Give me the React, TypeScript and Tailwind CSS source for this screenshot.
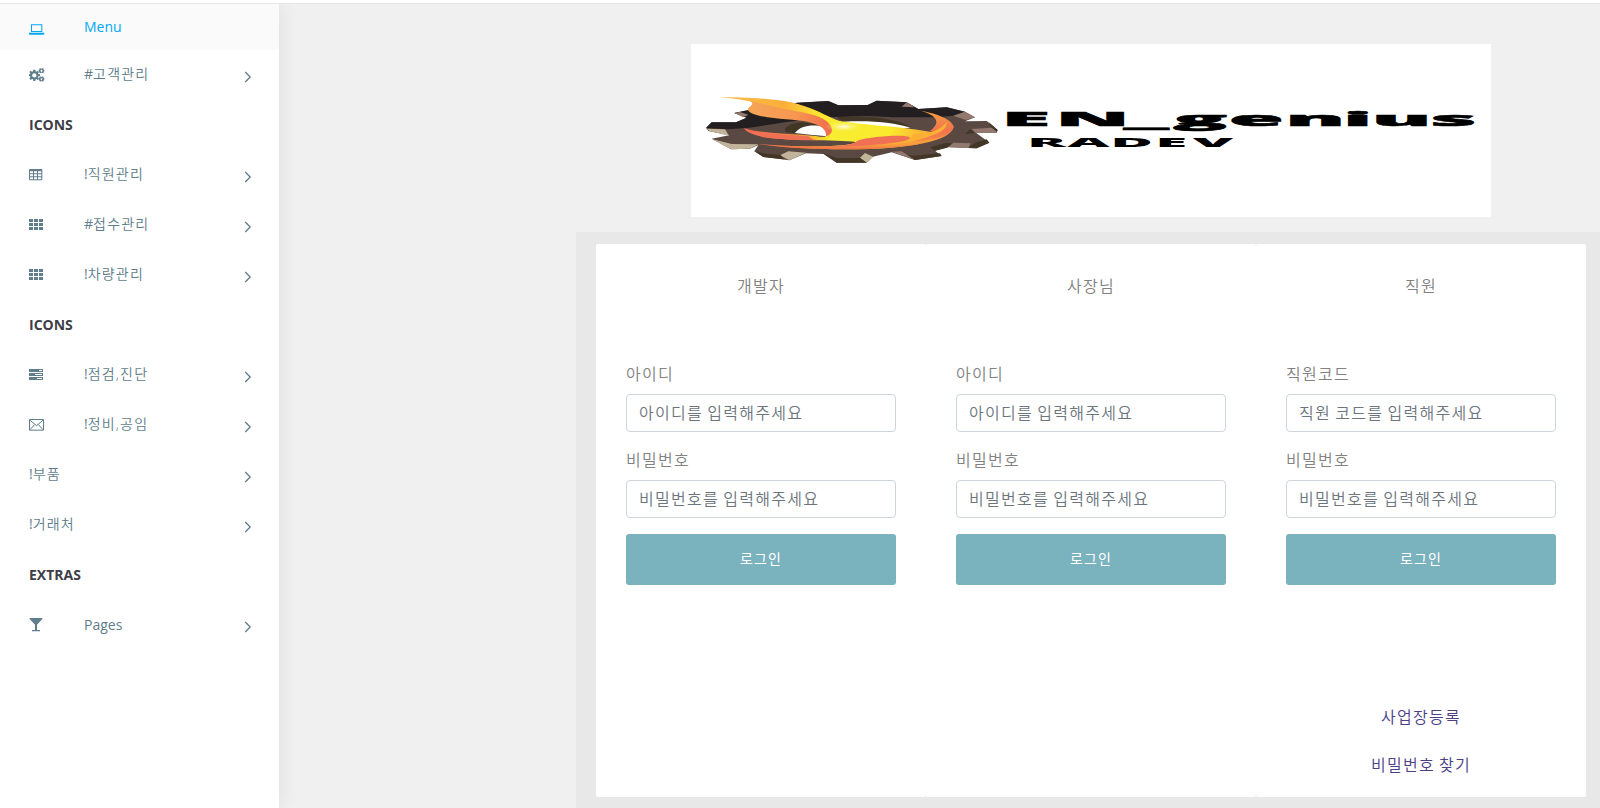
import React from "react";

const laptop = (
  <svg width="16" height="11" viewBox="0 0 48 33" className="mt-1" fill="currentColor">
    <path fillRule="evenodd" d="M6 1h34v23H6zM9 4v17h28V4zM0 26h46v4l-2 2H2l-2-2z" />
  </svg>
);

const cogs = (
  <svg width="16" height="14" viewBox="0 0 48 42" fill="currentColor">
    <path
      fillRule="evenodd"
      d="M13 5h6l1 5 3 1 3-3 4 4-3 4 1 2 5 1v5l-5 1-1 3 3 4-4 4-4-3-2 1-1 5h-6l-1-5-3-1-4 3-4-4 3-4-1-3-4-1v-5l4-1 1-2-3-4 4-4 4 3 3-1zM16 15.500a6.500 6.500 0 1 0 .01 0z"
    />
    <path
      fillRule="evenodd"
      d="M34 0l2 2h3l2-2 3 2v3l2 1v4l-2 1v3l-3 2-2-2h-3l-2 2-3-2V11l-2-1V6l2-1V2zM37.500 5.500a2.800 2.800 0 1 0 .01 0zM34 25l2 2h3l2-2 3 2v3l2 1v4l-2 1v3l-3 2-2-2h-3l-2 2-3-2v-3l-2-1v-4l2-1v-3zM37.500 30.500a2.800 2.800 0 1 0 .01 0z"
    />
  </svg>
);

const table = (
  <svg width="14" height="12" viewBox="0 0 42 36" fill="currentColor">
    <path
      fillRule="evenodd"
      d="M3 0h34q3 0 3 3v28q0 3-3 3H3q-3 0-3-3V3q0-3 3-3zM3 7v6h9V7zM15 7v6h9V7zM27 7v6h10V7zM3 16v6h9v-6zM15 16v6h9v-6zM27 16v6h10v-6zM3 25v6h9v-6zM15 25v6h9v-6zM27 25v6h10v-6z"
    />
  </svg>
);

const grid = (
  <svg width="14" height="12" viewBox="0 0 42 36" fill="currentColor">
    <path d="M0 0h12v9H0zM15 0h12v9H15zM30 0h12v9H30zM0 12h12v9H0zM15 12h12v9H15zM30 12h12v9H30zM0 24h12v9H0zM15 24h12v9H15zM30 24h12v9H30z" />
  </svg>
);

const tasks = (
  <svg width="14" height="12" viewBox="0 0 42 36" fill="currentColor">
    <path
      fillRule="evenodd"
      d="M0 0h42v9H0zM30 3v3h9V3zM0 12h42v9H0zM18 15v3h21v-3zM0 24h42v9H0zM24 27v3h15v-3z"
    />
  </svg>
);

const mail = (
  <svg width="15" height="12" viewBox="0 0 45 36" fill="none" stroke="currentColor" strokeWidth="3">
    <path d="M1.500 1.500h42v32h-42z" />
    <path d="M2 3l20.500 17L43 3M3 32l14-15M42 32L28 17" />
  </svg>
);

const glass = (
  <svg width="14" height="14" viewBox="0 0 42 42" fill="currentColor">
    <path d="M2 0h38v3L24 20v16h9v4H9v-4h9V20L2 3z" />
  </svg>
);

type NavEntry = { heading?: string; mark?: string; label?: string; icon?: React.ReactNode };

const entries: NavEntry[] = [
  { mark: "#", label: "고객관리", icon: cogs },
  { heading: "ICONS" },
  { mark: "!", label: "직원관리", icon: table },
  { mark: "#", label: "접수관리", icon: grid },
  { mark: "!", label: "차량관리", icon: grid },
  { heading: "ICONS" },
  { mark: "!", label: "점검,진단", icon: tasks },
  { mark: "!", label: "정비,공임", icon: mail },
  { mark: "!", label: "부품" },
  { mark: "!", label: "거래처" },
  { heading: "EXTRAS" },
  { label: "Pages", icon: glass },
];

function NavRow({ entry }: { entry: NavEntry }) {
  if (entry.heading) {
    return (
      <li className="flex h-[50px] items-center pl-[29px] text-sm font-bold text-[#3e3e48]">{entry.heading}</li>
    );
  }
  return (
    <li className="flex h-[50px] items-center pr-[27px] pl-[29px] text-sm text-[#607d8b]">
      {entry.icon && <span className="flex w-[55px] shrink-0 items-center">{entry.icon}</span>}
      <span className={entry.mark ? "grow pb-0.5" : "grow"}>
        {entry.mark}
        <span className={entry.mark ? "font-[350] tracking-[1.2px]" : ""}>{entry.label}</span>
      </span>
      <svg width="8" height="12" viewBox="0 0 8 12" fill="none" stroke="currentColor" strokeWidth="1.300" className="mt-1">
        <path d="M1.200 1l5 5-5 5" />
      </svg>
    </li>
  );
}

function Logo() {
  return (
    <svg width="800" height="173" viewBox="33 42 2400 519" className="block bg-white">
      <defs>
        <linearGradient id="tail" x1="0" y1="0" x2="1" y2="0">
          <stop offset="0" stopColor="#fbb040" />
          <stop offset="0.350" stopColor="#f6a257" />
          <stop offset="0.700" stopColor="#f6954f" />
          <stop offset="1" stopColor="#ee6a4f" />
        </linearGradient>
        <linearGradient id="top" x1="0" y1="0" x2="1" y2="0">
          <stop offset="0" stopColor="#fbc04a" />
          <stop offset="0.550" stopColor="#fbae3b" />
          <stop offset="0.800" stopColor="#fce02f" />
          <stop offset="1" stopColor="#f8ed31" />
        </linearGradient>
        <linearGradient id="under" x1="0" y1="0" x2="0" y2="1">
          <stop offset="0" stopColor="#f9a03e" />
          <stop offset="0.600" stopColor="#f0744f" />
          <stop offset="1" stopColor="#f58a45" />
        </linearGradient>
        <linearGradient id="body" x1="0" y1="0" x2="1" y2="0">
          <stop offset="0" stopColor="#f15a4f" />
          <stop offset="0.280" stopColor="#f9a033" />
          <stop offset="0.420" stopColor="#f8ed31" />
          <stop offset="0.700" stopColor="#f9ea2d" />
          <stop offset="0.880" stopColor="#fba93a" />
          <stop offset="1" stopColor="#f47b4b" />
        </linearGradient>
        <linearGradient id="rim" x1="0" y1="0" x2="0" y2="1">
          <stop offset="0" stopColor="#f15a4f" stopOpacity="0" />
          <stop offset="0.500" stopColor="#f9a033" stopOpacity="0.200" />
          <stop offset="1" stopColor="#f15a4f" stopOpacity="0.900" />
        </linearGradient>
        <radialGradient id="glow">
          <stop offset="0" stopColor="#fffde8" />
          <stop offset="1" stopColor="#f8ed31" stopOpacity="0" />
        </radialGradient>
      </defs>

      <path
        fill="#5a4942"
        d="M78 294L95 277L168 277L200 263L163 249L195 242L352 218L445 213L475 226L563 225L590 212L680 217L715 237L800 232L855 245L885 262L855 274L920 273L953 300L950 308L888 308L928 338L890 355L805 352L765 362L785 378L705 390L635 367L579 380L560 398L470 398L430 372L378 370L328 391L250 381L223 364L235 345L210 356L153 358L95 326L147 316L85 303z"
      />
      <path
        fill="#231f20"
        d="M78 294L95 277L168 277L200 263L163 249L195 242L352 218L445 213L475 226L563 225L590 212L680 217L715 237L800 232L855 245L820 257L770 262L640 262L560 258L440 262L320 276L210 293L145 298z"
      />
      <path fill="#c1b49a" d="M78 296L135 298L147 317L90 304zM95 327L153 358L210 356L235 343L155 342zM300 376L325 364L378 368L328 391zM540 383L555 369L579 380L560 398z" />
      <path
        fill="#423626"
        d="M223 363L250 381L312 388L302 375L250 370zM430 370L470 398L560 398L540 384L470 384zM660 371L700 377L780 370L785 378L705 390zM750 352L800 338L818 341L800 353L765 362zM865 354L885 338L920 328L928 338L890 355zM855 312L870 298L888 308zM925 275L953 300L950 307L935 293z"
      />
      <path
        fill="#93796f"
        d="M635 365L665 364L704 389zM805 351L820 338L872 340L865 354zM885 308L875 297L935 293L952 307zM665 230L680 217L705 232zM820 257L855 245L885 262L857 270zM163 249L180 246L205 254L190 262z"
      />
      <path fill="#423626" d="M316 306C310 292 328 280 368 277L470 290L355 306L345 309z" />
      <path fill="#423626" d="M470 262C560 254 660 266 692 293L670 296L500 282z" />
      <path fill="#fff" d="M345 309C360 286 400 282 430 290L445 318C420 318 380 312 345 309z" />
      <path fill="#fff" d="M490 275C570 270 650 278 692 294L620 296L500 284z" />

      <path
        fill="url(#body)"
        d="M190 294C250 312 330 310 405 318C425 321 434 322 438 318C452 300 450 275 400 242L455 268C540 288 640 285 755 306C785 292 800 280 821 290C815 330 700 358 500 358C380 358 300 352 235 342C330 352 520 352 527 336C480 330 300 332 250 322C215 312 200 305 190 294z"
      />
      <path
        fill="url(#rim)"
        d="M755 306C785 292 800 280 821 290C815 330 700 358 500 358C380 358 300 352 235 342C330 352 520 352 527 336z"
      />
      <path fill="#ef7055" d="M194 297C255 314 330 312 385 319C395 326 400 330 415 331C330 331 215 325 194 297z" />
      <path fill="#ef7055" d="M400 352C480 350 520 346 530 334C545 322 680 310 690 323C692 338 560 350 400 352z" />
      <path fill="url(#under)" d="M722 242C790 254 821 276 821 292C812 318 760 330 690 337C740 325 780 312 802 280C794 290 776 304 748 304C782 280 776 258 722 242z" />
      <path fill="#fbb034" d="M690 330C750 322 805 306 800 276C782 300 750 312 700 312z" />
      <path fill="url(#tail)" d="M115 201C160 204 300 207 352 222C400 240 450 264 456 298C456 310 448 318 438 318C440 300 425 286 385 276C340 266 250 268 212 248C190 234 222 228 216 218C206 206 150 204 115 201z" />
      <path fill="url(#top)" d="M115 201C200 202 290 205 352 222C410 238 430 254 475 272L450 285C435 262 400 252 330 240C270 232 240 212 115 201z" />
      <ellipse cx="492" cy="290" rx="58" ry="17" fill="url(#glow)" />

      <text
        transform="translate(984 287.500) scale(4.6 1)"
        x="-4.2 31 75.7 107.8 144 181 218.6 237.200 275.600"
        className="fill-black stroke-black stroke-[1.6px] font-['Open_Sans',sans-serif] text-[58px] font-extrabold"
      >
        EN_genius
      </text>
      <text
        transform="translate(1055 352) scale(5 1)"
        x="-2.8 21.4 47.2 74.2 96.6"
        className="fill-black font-['Open_Sans',sans-serif] text-[35px] font-extrabold"
      >
        RADEV
      </text>
    </svg>
  );
}

type CardData = { title: string; idLabel: string; idHint: string; links?: string[] };

const cards: CardData[] = [
  { title: "개발자", idLabel: "아이디", idHint: "아이디를 입력해주세요" },
  { title: "사장님", idLabel: "아이디", idHint: "아이디를 입력해주세요" },
  { title: "직원", idLabel: "직원코드", idHint: "직원 코드를 입력해주세요", links: ["사업장등록", "비밀번호 찾기"] },
];

function Field({ label, hint, type }: { label: string; hint: string; type: string }) {
  return (
    <label className="mb-4 block">
      <span className="mb-2 block h-6 leading-6">{label}</span>
      <input
        type={type}
        placeholder={hint}
        className="block h-[38px] w-full rounded border border-[#ced4da] bg-white px-3 font-[350] tracking-[1.28px] [word-spacing:-1.2px] placeholder:text-[#6c757d] placeholder:opacity-100"
      />
    </label>
  );
}

function LoginCard({ card }: { card: CardData }) {
  return (
    <section className="flex h-[553px] w-[330px] flex-col rounded-[2px] bg-white px-[30px] pt-[30px] pb-5 text-base font-[350] tracking-[1.28px] text-[#828282]">
      <h2 className="mb-16 text-center leading-6">{card.title}</h2>
      <Field label={card.idLabel} hint={card.idHint} type="text" />
      <Field label="비밀번호" hint="비밀번호를 입력해주세요" type="password" />
      <button className="h-[51px] w-full shrink-0 rounded-[3px] bg-[#7ab2be] pb-px text-sm font-normal tracking-[1.1px] text-white">
        로그인
      </button>
      {card.links && (
        <div className="mt-auto flex flex-col items-center gap-6 text-[#4a4088] [word-spacing:-1.2px]">
          {card.links.map((l) => (
            <a key={l} href="#" className="leading-6">
              {l}
            </a>
          ))}
        </div>
      )}
    </section>
  );
}

export default function App() {
  return (
    <div className="flex h-[808px] w-[1600px] flex-col overflow-hidden bg-[#f0f0f0] font-['Open_Sans','Noto_Sans_CJK_KR',sans-serif]">
      <div className="h-1 shrink-0 border-b border-[#e6e6e6] bg-white" />
      <div className="flex min-h-0 grow overflow-hidden">
        <aside className="w-[279px] shrink-0 bg-white shadow-[1px_0_20px_rgba(0,0,0,0.08)]">
          <ul>
            <li className="flex h-[46px] items-center bg-[#fafafa] pl-[29px] text-sm text-[#03a9f3]">
              <span className="flex w-[55px] items-center">{laptop}</span>
              Menu
            </li>
            {entries.map((e, i) => (
              <NavRow key={i} entry={e} />
            ))}
          </ul>
        </aside>
        <main className="flex grow flex-col pt-10 pl-[297px]">
          <div className="pl-[115px]">
            <Logo />
          </div>
          <div className="mt-[15px] flex grow items-start bg-[#e8e8e8] pt-3 pl-5">
            {cards.map((c) => (
              <LoginCard key={c.title} card={c} />
            ))}
          </div>
        </main>
      </div>
    </div>
  );
}
